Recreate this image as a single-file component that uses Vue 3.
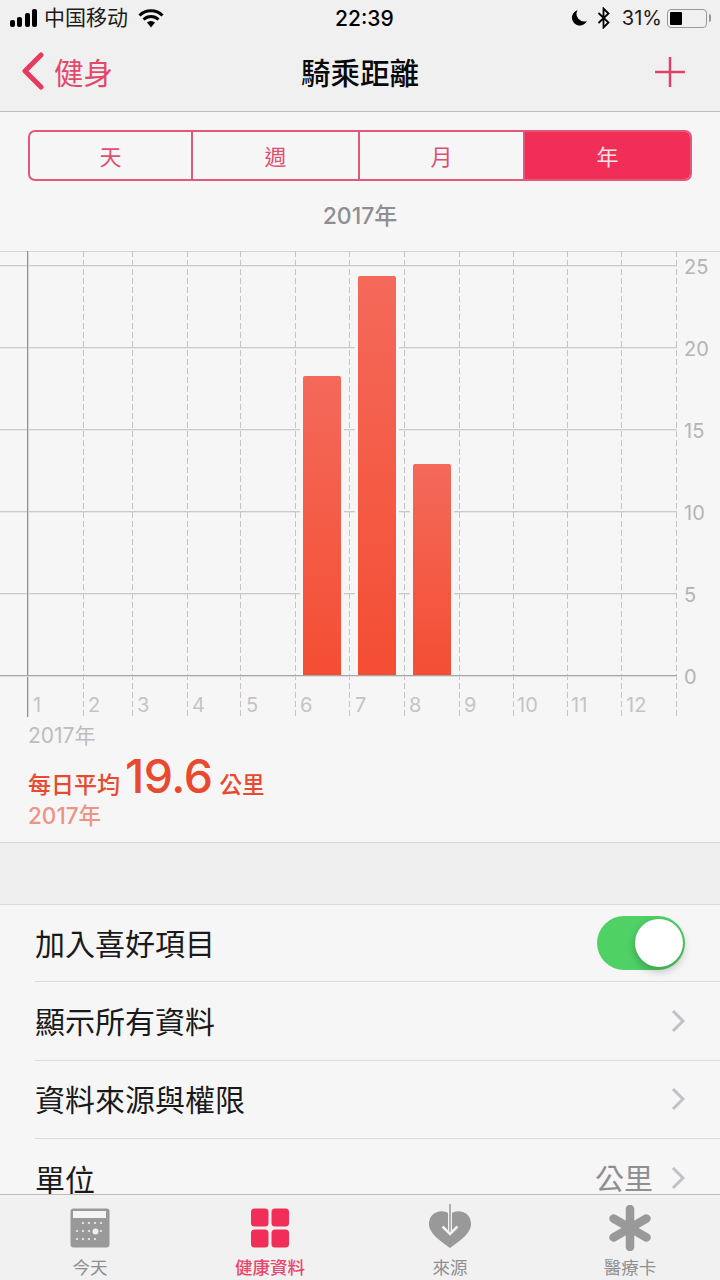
<template>
  <div class="phone">
    <header class="top">
      <div class="status">
        <div class="status-left">
          <svg class="signal" width="28" height="18" viewBox="0 0 28 18"><rect x="0" y="11" width="5" height="7" rx="2"/><rect x="7" y="8" width="5" height="10" rx="2"/><rect x="15" y="4" width="5" height="14" rx="2"/><rect x="22" y="0" width="5" height="18" rx="2"/></svg>
          <span class="carrier">中国移动</span>
          <svg class="wifi" width="26" height="19" viewBox="0 0 26 19"><path d="M1.5 6.5a16.5 16.5 0 0 1 23 0M5.5 10.5a11 11 0 0 1 15 0" fill="none" stroke="#000" stroke-width="3"/><path d="M9 13.6a6 6 0 0 1 8 0L13 18.4z"/></svg>
        </div>
        <div class="time">22:39</div>
        <div class="status-right">
          <svg class="moon" width="18" height="18" viewBox="0 0 18 18"><path d="M7.5 1.2A7.8 7.8 0 1 0 16.8 12 7.6 7.6 0 0 1 7.5 1.2z"/></svg>
          <svg class="bt" width="14" height="22" viewBox="0 0 14 22"><path d="M1.5 6l10 9.500L6.500 20.500V1.500l5 5-10 9.500" fill="none" stroke="#000" stroke-width="1.800"/></svg>
          <span class="pct">31%</span>
          <div class="battery"><div class="battery-fill"></div></div>
        </div>
      </div>
      <div class="nav">
        <div class="back">
          <svg width="24" height="38" viewBox="0 0 24 38"><path d="M20 3L4 19l16 16" fill="none" stroke="#e8395f" stroke-width="5" stroke-linecap="round" stroke-linejoin="round"/></svg>
          <span>健身</span>
        </div>
        <div class="nav-title">騎乘距離</div>
        <svg class="plus" width="30" height="30" viewBox="0 0 30 30"><path d="M15 0v30M0 15h30" stroke="#e0416a" stroke-width="2.500"/></svg>
      </div>
    </header>

    <main class="content">
      <section class="chart-section">
        <div class="segments">
          <div v-for="s in segments" :key="s" class="segment" :class="{ active: s === '年' }">{{ s }}</div>
        </div>
        <div class="period">2017年</div>

        <div class="chart">
          <div v-for="g in gridLines" :key="g.label" class="grid-line" :style="{ top: g.y + 'px' }"></div>
          <span v-for="g in gridLines" :key="'l' + g.label" class="y-label" :style="{ top: g.y - 12 + 'px' }">{{ g.label }}</span>
          <div class="axis"></div>
          <div v-for="m in months" :key="m.n" class="month-line" :style="{ left: m.x + 'px' }"></div>
          <span v-for="m in months" :key="'m' + m.n" class="x-label" :style="{ left: m.label + 'px' }">{{ m.n }}</span>
          <div v-for="b in bars" :key="b.x" class="bar" :style="{ left: b.x + 'px', top: b.y + 'px', height: 424 - b.y + 'px' }"></div>
          <div class="grid-line base"></div>
        </div>

        <div class="chart-year">2017年</div>
        <div class="avg">
          <span class="avg-label">每日平均</span>
          <span class="avg-value">19.6</span>
          <span class="avg-unit">公里</span>
        </div>
        <div class="avg-year">2017年</div>
      </section>

      <div class="spacer"></div>

      <section class="list">
        <div class="row">
          <div class="row-inner">
            <span class="row-title">加入喜好項目</span>
            <div class="toggle"><div class="knob"></div></div>
          </div>
        </div>
        <div v-for="r in rows" :key="r.title" class="row">
          <div class="row-inner">
            <span class="row-title">{{ r.title }}</span>
            <div class="row-right">
              <span v-if="r.value" class="row-value">{{ r.value }}</span>
              <svg width="14" height="24" viewBox="0 0 14 24"><path d="M2 2l10 10L2 22" fill="none" stroke="#c0c0c6" stroke-width="3"/></svg>
            </div>
          </div>
        </div>
      </section>
    </main>

    <footer class="tabbar">
      <div class="tab">
        <svg width="40" height="40" viewBox="0 0 40 40">
          <rect width="39" height="39" x="0.500" y="0.500" rx="3" fill="#999"/>
          <rect x="3" y="3" width="33" height="7" fill="#f4f4f4"/>
          <g fill="#f0f0f0">
            <circle v-for="d in calendarDots" :key="d[0] + '-' + d[1]" :cx="d[0]" :cy="d[1]" r="1.100"/>
            <circle cx="25.500" cy="23.500" r="3"/>
          </g>
        </svg>
        <span>今天</span>
      </div>
      <div class="tab on">
        <svg width="40" height="40" viewBox="0 0 40 40" fill="#f02e58">
          <rect x="1" y="0.500" width="17.500" height="18" rx="3.500"/><rect x="21.500" y="0.500" width="17.500" height="18" rx="3.500"/>
          <rect x="1" y="21.500" width="17.500" height="18" rx="3.500"/><rect x="21.500" y="21.500" width="17.500" height="18" rx="3.500"/>
        </svg>
        <span>健康資料</span>
      </div>
      <div class="tab">
        <svg width="44" height="44" viewBox="0 0 44 44" class="src">
          <path d="M22 10.500C18 7 13 6.500 8 8.500 2.500 11 .8 16 1 21c.4 8 11 16 21 23 10-7 20.600-15 21-23 .2-5-1.500-10-7-12.500-5-2-10-1.500-14 2z" fill="#999"/>
          <path d="M22 9v20" stroke="#f2f2f2" stroke-width="4" fill="none"/>
          <path d="M22 0v30" stroke="#999" stroke-width="1.500" fill="none"/>
          <path d="M14.500 22.500L22 30l7.500-7.500" stroke="#f2f2f2" stroke-width="2.500" fill="none"/>
        </svg>
        <span>來源</span>
      </div>
      <div class="tab">
        <svg width="44" height="46" viewBox="0 0 44 46" class="star">
          <g stroke="#999" stroke-width="8.500" stroke-linecap="round">
            <path d="M22 4v38"/><path d="M5.500 13.500l33 19"/><path d="M38.500 13.500l-33 19"/>
          </g>
        </svg>
        <span>醫療卡</span>
      </div>
    </footer>
  </div>
</template>

<script setup>
const segments = ['天', '週', '月', '年']

const gridLines = [
  { label: 25, y: 14 },
  { label: 20, y: 96 },
  { label: 15, y: 178 },
  { label: 10, y: 260 },
  { label: 5, y: 342 },
  { label: 0, y: 424 }
]

const months = [
  { n: 1, x: 83, label: 33 },
  { n: 2, x: 132, label: 88 },
  { n: 3, x: 187, label: 137 },
  { n: 4, x: 240, label: 192 },
  { n: 5, x: 295, label: 246 },
  { n: 6, x: 349, label: 300 },
  { n: 7, x: 404, label: 355 },
  { n: 8, x: 459, label: 409 },
  { n: 9, x: 513, label: 464 },
  { n: 10, x: 567, label: 517 },
  { n: 11, x: 621, label: 571 },
  { n: 12, x: 676, label: 626 }
]

const bars = [
  { x: 303, y: 125 },
  { x: 358, y: 25 },
  { x: 413, y: 213 }
]

const calendarDots = [
  [13, 15], [19, 15], [25, 15], [31, 15],
  [7, 23], [13, 23], [19, 23], [31, 23],
  [7, 31], [13, 31], [19, 31], [25, 31]
]

const rows = [
  { title: '顯示所有資料' },
  { title: '資料來源與權限' },
  { title: '單位', value: '公里' }
]
</script>

<style scoped>
.phone {
  width: 720px;
  height: 1280px;
  display: flex;
  flex-direction: column;
  overflow: hidden;
  background: #f6f6f6;
  color: #111;
  font-family: Inter, "Noto Sans CJK TC", sans-serif;
}

.top {
  height: 111px;
  flex: none;
  background: #f0f0f0;
  border-bottom: 1px solid #bdbdbd;
}

.status {
  height: 36px;
  padding: 0 10px;
  display: flex;
  align-items: center;
  justify-content: space-between;
  position: relative;
  font-size: 21px;
  color: #1c1c1c;
}

.status-left, .status-right {
  display: flex;
  align-items: center;
}

.signal { margin-right: 6px; }
.wifi { margin-left: 10px; }

.carrier {
  font-weight: 400;
  line-height: 36px;
}

.time {
  position: absolute;
  left: 335px;
  font-size: 21px;
  font-weight: 500;
  color: #000;
}

.moon { margin-right: 9px; }
.bt { margin-right: 11px; }

.pct { font-size: 20px; }

.battery {
  position: relative;
  width: 40px;
  height: 19px;
  margin: 0 3px 0 5px;
  padding: 2px;
  box-sizing: border-box;
  border: 1.500px solid #999;
  border-radius: 4px;
}

.battery::after {
  content: "";
  position: absolute;
  right: -5px;
  top: 4px;
  width: 2px;
  height: 8px;
  background: #999;
  border-radius: 0 2px 2px 0;
}

.battery-fill {
  width: 12px;
  height: 100%;
  background: #000;
  border-radius: 1px;
}

.nav {
  height: 75px;
  display: flex;
  align-items: center;
  position: relative;
  padding: 0 35px 6px 21px;
  box-sizing: border-box;
  justify-content: space-between;
}

.back {
  display: flex;
  align-items: center;
  gap: 9px;
  color: #e2486c;
  font-size: 29.500px;
}

.nav-title {
  position: absolute;
  left: 0;
  right: 0;
  text-align: center;
  font-size: 29.500px;
  font-weight: 500;
  color: #0a0a0a;
  pointer-events: none;
}

.plus { margin-top: 2px; }

.content {
  flex: 1;
  min-height: 0;
  overflow: hidden;
}

.chart-section {
  height: 731px;
  padding-top: 18px;
  box-sizing: border-box;
  border-bottom: 1px solid #d6d6d6;
}

.segments {
  display: flex;
  margin: 0 28px;
  height: 51px;
  box-sizing: border-box;
  border: 2px solid #e0597a;
  border-radius: 7px;
  overflow: hidden;
}

.segment {
  flex: 0 0 auto;
  box-sizing: border-box;
  padding-bottom: 1px;
  display: flex;
  align-items: center;
  justify-content: center;
  color: #df4f73;
  font-size: 22px;
  border-right: 2px solid #e0597a;
}

.segment:nth-child(1) { width: 163px; }
.segment:nth-child(2) { width: 167px; }
.segment:nth-child(3) { width: 165px; }

.segment:last-child {
  flex: 1;
  border-right: none;
}

.segment.active {
  background: #f02e58;
  color: #fbe3e8;
}

.period {
  height: 70px;
  line-height: 70px;
  text-align: center;
  font-size: 23px;
  font-weight: 500;
  color: #8e8e93;
}

.chart {
  position: relative;
  height: 466px;
  box-shadow: inset 0 1px #d4d4d4;
}

.grid-line {
  position: absolute;
  left: 0;
  width: 677px;
  height: 1px;
  background: #cbcbcb;
  box-shadow: 0 1px #e8e8e8;
}

.grid-line.base {
  top: 424px;
  background: #a8a8a8;
  box-shadow: 0 1px #dcdcdc;
}

.axis {
  position: absolute;
  left: 27px;
  top: 0;
  height: 466px;
  width: 1px;
  background: #8f8f8f;
  box-shadow: 1px 0 #d8d8d8;
}

.month-line {
  position: absolute;
  top: 0;
  height: 466px;
  width: 1px;
  background: repeating-linear-gradient(#c4c4c4 0 6px, transparent 6px 9px);
}

.bar {
  position: absolute;
  width: 38px;
  border-radius: 2px 2px 0 0;
  background: linear-gradient(#f4695a, #f44e33);
  box-shadow: 0 0 0 3px #f6f6f6;
}

.y-label {
  position: absolute;
  left: 684px;
  font-size: 20px;
  line-height: 28px;
  color: #b4b4b4;
}

.x-label {
  position: absolute;
  top: 440px;
  font-size: 20px;
  line-height: 28px;
  color: #c4c4c4;
}

.chart-year {
  margin-left: 28px;
  height: 36px;
  line-height: 38px;
  font-size: 21px;
  color: #bdbdbd;
}

.avg {
  margin: -5px 0 0 28px;
  display: flex;
  align-items: baseline;
  height: 44px;
  color: #e8492f;
}

.avg-label {
  font-size: 23px;
  font-weight: 500;
}

.avg-value {
  font-size: 46.500px;
  font-weight: 500;
  margin: 0 7px 0 5px;
  letter-spacing: -0.500px;
}

.avg-unit {
  font-size: 22.500px;
  font-weight: 500;
}

.avg-year {
  margin: 9px 0 0 28px;
  line-height: 30px;
  font-size: 22.500px;
  font-weight: 500;
  color: #ee9485;
}

.spacer {
  height: 61px;
  background: #efefef;
  border-bottom: 1px solid #dcdcdc;
}

.row {
  height: 78.500px;
  padding-left: 35px;
  font-size: 30px;
  line-height: 1;
  color: #1a1a1a;
}

.row:first-child {
  height: 77px;
}

.row-inner {
  height: 100%;
  padding-right: 35px;
  display: flex;
  align-items: center;
  justify-content: space-between;
  border-bottom: 1px solid #dcdcdc;
  box-sizing: border-box;
}

.row-title {
  margin-top: 2px;
}

.row:last-child .row-title {
  margin-top: 4px;
}

.row-right {
  display: flex;
  align-items: center;
  gap: 18px;
}

.row-value {
  margin-top: 4px;
  color: #8e8e93;
  font-size: 29px;
}

.toggle {
  width: 88px;
  height: 54px;
  border-radius: 27px;
  background: #4fd166;
  position: relative;
}

.knob {
  position: absolute;
  top: 3px;
  right: 2px;
  width: 48px;
  height: 48px;
  border-radius: 50%;
  background: #fff;
  box-shadow: 0 4px 8px rgba(0, 0, 0, 0.25);
}

.tabbar {
  height: 86px;
  flex: none;
  box-sizing: border-box;
  border-top: 1px solid #bdbdbd;
  background: #f1f1f1;
  display: grid;
  grid-template-columns: repeat(4, 180px);
  position: relative;
}

.tab {
  display: flex;
  flex-direction: column;
  align-items: center;
  padding-top: 13px;
  position: relative;
  height: 85px;
  box-sizing: border-box;
  color: #8f8f8f;
  font-size: 17.500px;
}

.tab span {
  position: absolute;
  top: 60px;
  line-height: 26px;
  white-space: nowrap;
}

.tab.on { color: #e8476b; font-weight: 500; }

.src { margin-top: -4px; }
.star { margin-top: -3px; }
</style>

<style>
html, body {
  background: #f6f6f6;
}
</style>
